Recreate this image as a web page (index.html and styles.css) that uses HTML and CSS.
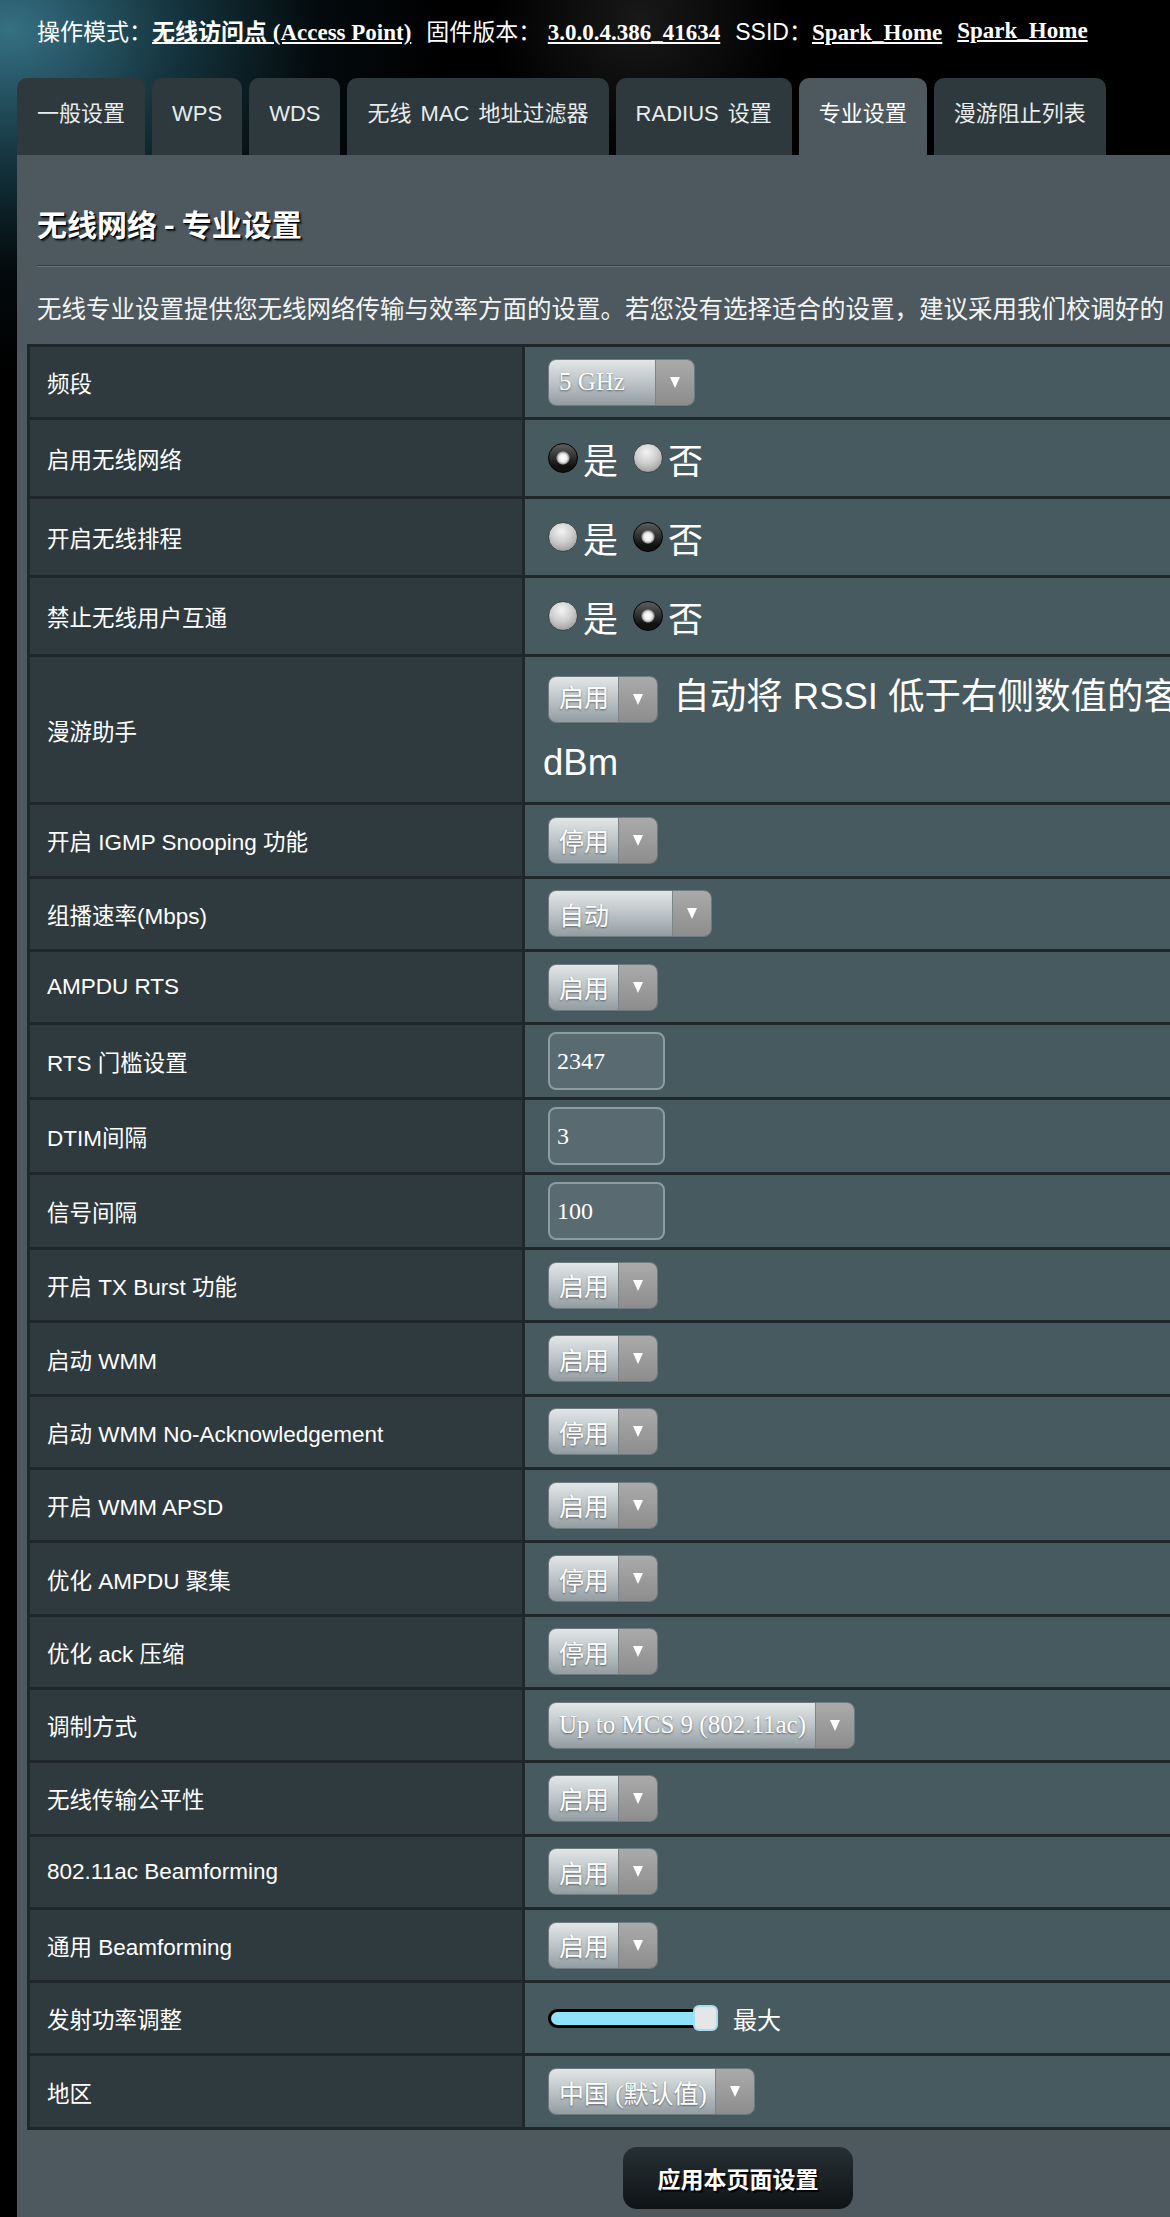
FILE: index.html
```html
<!DOCTYPE html>
<html lang="zh-CN">
<head>
<meta charset="utf-8">
<title>无线网络 - 专业设置</title>
<link rel="stylesheet" href="styles.css">
</head>
<body>
<header class="status">
  <span class="status-item">操作模式：<a href="#">无线访问点 (Access Point)</a></span>
  <span class="status-item">固件版本： <a href="#">3.0.0.4.386_41634</a></span>
  <span class="status-item">SSID：<a href="#">Spark_Home</a></span>
  <span class="status-item"><a href="#">Spark_Home</a></span>
</header>
<div class="main">
  <nav class="tabs">
    <a class="tab" href="#">一般设置</a>
    <a class="tab" href="#">WPS</a>
    <a class="tab" href="#">WDS</a>
    <a class="tab" href="#">无线 MAC 地址过滤器</a>
    <a class="tab" href="#">RADIUS 设置</a>
    <a class="tab active" href="#">专业设置</a>
    <a class="tab" href="#">漫游阻止列表</a>
  </nav>
  <section class="panel">
    <div class="intro">
      <h1 class="title">无线网络 - 专业设置</h1>
      <hr class="divider">
      <p class="desc">无线专业设置提供您无线网络传输与效率方面的设置。若您没有选择适合的设置，建议采用我们校调好的</p>
    </div>
    <table class="form">
      <tr><th>频段</th><td><span class="sel sel-m"><span class="sel-text">5 GHz</span><span class="sel-arrow"></span></span></td></tr>
      <tr class="row-radio"><th>启用无线网络</th><td><label class="radio"><span class="radio-dot on"></span>是</label><label class="radio"><span class="radio-dot"></span>否</label></td></tr>
      <tr class="row-radio"><th>开启无线排程</th><td><label class="radio"><span class="radio-dot"></span>是</label><label class="radio"><span class="radio-dot on"></span>否</label></td></tr>
      <tr class="row-radio"><th>禁止无线用户互通</th><td><label class="radio"><span class="radio-dot"></span>是</label><label class="radio"><span class="radio-dot on"></span>否</label></td></tr>
      <tr class="row-rssi"><th>漫游助手</th><td class="rssi"><span class="sel sel-s"><span class="sel-text">启用</span><span class="sel-arrow"></span></span> 自动将 RSSI 低于右侧数值的客<br><span class="unit">dBm</span></td></tr>
      <tr><th>开启 IGMP Snooping 功能</th><td><span class="sel sel-s"><span class="sel-text">停用</span><span class="sel-arrow"></span></span></td></tr>
      <tr><th>组播速率(Mbps)</th><td><span class="sel sel-l"><span class="sel-text">自动</span><span class="sel-arrow"></span></span></td></tr>
      <tr><th>AMPDU RTS</th><td><span class="sel sel-s"><span class="sel-text">启用</span><span class="sel-arrow"></span></span></td></tr>
      <tr class="row-input"><th>RTS 门槛设置</th><td><input class="txt" type="text" value="2347"></td></tr>
      <tr class="row-input"><th>DTIM间隔</th><td><input class="txt" type="text" value="3"></td></tr>
      <tr class="row-input"><th>信号间隔</th><td><input class="txt" type="text" value="100"></td></tr>
      <tr><th>开启 TX Burst 功能</th><td><span class="sel sel-s"><span class="sel-text">启用</span><span class="sel-arrow"></span></span></td></tr>
      <tr><th>启动 WMM</th><td><span class="sel sel-s"><span class="sel-text">启用</span><span class="sel-arrow"></span></span></td></tr>
      <tr><th>启动 WMM No-Acknowledgement</th><td><span class="sel sel-s"><span class="sel-text">停用</span><span class="sel-arrow"></span></span></td></tr>
      <tr><th>开启 WMM APSD</th><td><span class="sel sel-s"><span class="sel-text">启用</span><span class="sel-arrow"></span></span></td></tr>
      <tr><th>优化 AMPDU 聚集</th><td><span class="sel sel-s"><span class="sel-text">停用</span><span class="sel-arrow"></span></span></td></tr>
      <tr><th>优化 ack 压缩</th><td><span class="sel sel-s"><span class="sel-text">停用</span><span class="sel-arrow"></span></span></td></tr>
      <tr><th>调制方式</th><td><span class="sel sel-xxl"><span class="sel-text">Up to MCS 9 (802.11ac)</span><span class="sel-arrow"></span></span></td></tr>
      <tr><th>无线传输公平性</th><td><span class="sel sel-s"><span class="sel-text">启用</span><span class="sel-arrow"></span></span></td></tr>
      <tr><th>802.11ac Beamforming</th><td><span class="sel sel-s"><span class="sel-text">启用</span><span class="sel-arrow"></span></span></td></tr>
      <tr><th>通用 Beamforming</th><td><span class="sel sel-s"><span class="sel-text">启用</span><span class="sel-arrow"></span></span></td></tr>
      <tr><th>发射功率调整</th><td><span class="slider"><span class="slider-track"></span><span class="slider-thumb"></span></span><span class="slider-label">最大</span></td></tr>
      <tr><th>地区</th><td><span class="sel sel-xl"><span class="sel-text">中国 (默认值)</span><span class="sel-arrow"></span></span></td></tr>
    </table>
    <div class="actions"><button class="btn" type="button">应用本页面设置</button></div>
  </section>
</div>
</body>
</html>
```
FILE: styles.css
```css
html, body {
  margin: 0;
  padding: 0;
  overflow: hidden;
}

body {
  font-family: "Liberation Sans", "Noto Sans CJK SC", sans-serif;
  color: #fff;
  background-color: #000;
  background-image:
    radial-gradient(ellipse 440px 340px at 10px 30px, rgba(56, 118, 138, 0.95) 0%, rgba(28, 70, 84, 0.7) 40%, rgba(8, 24, 30, 0.45) 70%, rgba(0, 0, 0, 0) 100%),
    radial-gradient(circle 150px at 640px 20px, rgba(70, 70, 70, 0.35) 0%, rgba(0, 0, 0, 0) 100%);
  background-repeat: no-repeat;
}

/* status line */
.status {
  display: flex;
  align-items: center;
  gap: 15px;
  height: 60px;
  padding-left: 37px;
  font-size: 23px;
  white-space: nowrap;
}

.status a {
  font-family: "Liberation Serif", "Noto Sans CJK SC", serif;
  font-weight: bold;
  color: #fff;
  text-decoration: underline;
}

/* tabs */
.main {
  margin: 18px 0 0 17px;
  width: 1442px;
}

.tabs {
  display: flex;
  gap: 7px;
  height: 77px;
}

.tab {
  display: flex;
  align-items: center;
  box-sizing: border-box;
  padding: 0 20px 5px;
  background: #2e393d;
  border-radius: 10px 10px 0 0;
  font-size: 22px;
  line-height: 1;
  word-spacing: 3px;
  color: #e8ecec;
  text-decoration: none;
  white-space: nowrap;
}

.tab.active {
  background: #4d595e;
  color: #fff;
}

/* panel */
.panel {
  background: #4d595e;
  padding: 0 10px 60px;
}

.intro {
  padding: 0 10px;
}

.title {
  margin: 0;
  padding-top: 48px;
  font-family: "Noto Sans CJK SC", sans-serif;
  font-size: 30px;
  line-height: 40px;
  font-weight: bold;
  text-shadow: 1px 1px 0 #000, 2px 2px 2px rgba(0, 0, 0, 0.75);
}

.divider {
  margin: 22px 0 0;
  height: 0;
  border: 0;
  border-top: 1px solid #343e42;
  border-bottom: 1px solid #68747a;
}

.desc {
  margin: 26px 0 0;
  font-size: 24.5px;
  line-height: 34px;
  white-space: nowrap;
  color: #f2f4f4;
}

/* form table */
.form {
  margin-top: 17px;
  width: 1422px;
  border-collapse: separate;
  border-spacing: 0;
  border-top: 3px solid #1f272a;
  border-left: 3px solid #1f272a;
}

.form th,
.form td {
  height: 70.3px;
  padding: 0;
  border-right: 3px solid #1f272a;
  border-bottom: 3px solid #1f272a;
  vertical-align: middle;
}

.form th {
  width: 475px;
  padding-left: 17px;
  background: #2f3a3e;
  text-align: left;
  font-weight: normal;
  font-size: 22.5px;
  color: #fff;
}

.form td {
  padding-left: 23px;
  background: #475a60;
  white-space: nowrap;
}

.row-radio th,
.row-radio td {
  height: 76px;
}

.row-input th,
.row-input td {
  height: 72px;
}

.row-rssi th,
.row-rssi td {
  height: 145px;
}

/* select look-alike */
.sel {
  display: inline-flex;
  vertical-align: middle;
  box-sizing: border-box;
  height: 47px;
  border: 1px solid #6d7a7f;
  border-radius: 8px;
  overflow: hidden;
}

.sel-text {
  flex: 1;
  display: flex;
  align-items: center;
  padding-left: 10px;
  background: linear-gradient(to bottom, #e2e6e7 0%, #c0c8cb 45%, #939da1 100%);
  font-family: "Liberation Serif", "Noto Sans CJK SC", serif;
  font-size: 25px;
  color: #fff;
  text-shadow: 0 1px 2px rgba(0, 0, 0, 0.45);
  white-space: nowrap;
}

.sel-arrow {
  width: 38px;
  display: flex;
  align-items: center;
  justify-content: center;
  background: linear-gradient(to bottom, #aaaaaa, #8d8d8d);
  border-left: 1px solid #7d8487;
}

.sel-arrow::before {
  content: "";
  border-left: 5px solid transparent;
  border-right: 5px solid transparent;
  border-top: 11px solid #fff;
}

.sel-s { width: 110px; }
.sel-m { width: 147px; }
.sel-l { width: 164px; }
.sel-xl { width: 207px; }
.sel-xxl { width: 307px; }

/* radios */
.radio {
  display: inline-flex;
  align-items: center;
  vertical-align: middle;
  margin-right: 15px;
  font-family: "Noto Sans CJK SC", sans-serif;
  font-size: 35px;
  line-height: 1;
}

.radio-dot {
  flex: none;
  width: 30px;
  height: 30px;
  box-sizing: border-box;
  margin-right: 5px;
  border-radius: 50%;
  border: 1px solid #3f4548;
  background: radial-gradient(circle at 45% 30%, #f3f3f3 0%, #cdcdcd 45%, #858585 100%);
}

.radio-dot.on {
  border: 1px solid #000;
  background:
    radial-gradient(circle, #ffffff 0, #eeeeee 4px, #9a9a9a 6px, rgba(0, 0, 0, 0) 7px),
    linear-gradient(to bottom, #5e5e5e, #111 80%);
}

/* roaming assistant */
.rssi {
  font-size: 36.5px;
  line-height: 66px;
}

.rssi .sel {
  margin-right: 5px;
}

.unit {
  margin-left: -5px;
}

/* text inputs */
.txt {
  box-sizing: border-box;
  width: 117px;
  height: 58px;
  padding: 0 7px;
  vertical-align: middle;
  border: 2px solid #8c9ca1;
  border-radius: 8px;
  background: #596a70;
  color: #fff;
  font-family: "Liberation Serif", serif;
  font-size: 24px;
}

/* slider */
.slider {
  display: inline-flex;
  align-items: center;
  vertical-align: middle;
}

.slider-track {
  box-sizing: border-box;
  width: 155px;
  height: 19px;
  border: 3px solid #000;
  border-radius: 10px;
  background: #8fe2fa;
}

.slider-thumb {
  box-sizing: border-box;
  width: 25px;
  height: 26px;
  margin-left: -10px;
  border: 2px solid #a6dcec;
  border-radius: 6px;
  background: #e5e6e7;
}

.slider-label {
  vertical-align: middle;
  margin-left: 15px;
  font-size: 24px;
}

/* apply button */
.actions {
  display: flex;
  justify-content: center;
  margin-top: 17px;
}

.btn {
  width: 230px;
  height: 62px;
  border: 0;
  border-radius: 14px;
  background: linear-gradient(to bottom, #263034, #0f1315);
  color: #fff;
  font-family: "Noto Sans CJK SC", sans-serif;
  font-weight: bold;
  font-size: 23px;
  text-shadow: 2px 2px 1px #000;
}
```
